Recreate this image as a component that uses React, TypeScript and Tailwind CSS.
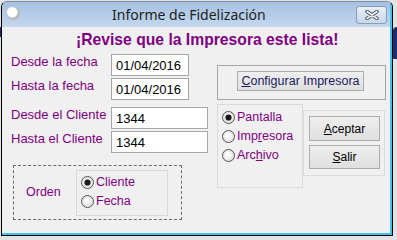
import React from "react";

const Radio = ({ checked }: { checked?: boolean }) => (
  <svg width="13" height="13" viewBox="0 0 13 13" className="shrink-0">
    <defs>
      <radialGradient id="rg" cx="0.4" cy="0.4" r="0.7">
        <stop offset="0" stopColor="#ffffff" />
        <stop offset="1" stopColor="#e4e4e4" />
      </radialGradient>
    </defs>
    <circle cx="6.5" cy="6.5" r="6" fill="url(#rg)" stroke="#505050" strokeWidth="1" />
    <circle cx="6.5" cy="6.5" r="4.8" fill="none" stroke="#d6d6d6" strokeWidth="0.8" />
    {checked && <circle cx="6.5" cy="6.5" r="3.1" fill="#1a1a1a" />}
  </svg>
);

const RadioRow = ({ checked, children }: { checked?: boolean; children: React.ReactNode }) => (
  <div className="h-[19px] flex items-center gap-[2px]">
    <Radio checked={checked} />
    <span className="text-[12.5px] leading-[15px] text-[#800080]">{children}</span>
  </div>
);

const Field = ({ label, value, w, mt }: { label: string; value: string; w: string; mt: string }) => (
  <div className={`flex items-start ${mt}`}>
    <div className="w-[100px] text-[13px] leading-[15px] text-[#800080]">{label}</div>
    <div className={`${w} h-[22px] border border-[#a6a6a6] bg-white pl-[4px] pt-[3px] text-[13px] leading-[15px] text-black`}>
      {value}
    </div>
  </div>
);

const Btn = ({ children, h }: { children: React.ReactNode; h: string }) => (
  <div
    className={`w-[71px] ${h} border border-[#acacac] bg-gradient-to-b from-[#efefef] to-[#dfdfdf] flex items-center justify-center text-[12px] leading-[14px] text-black`}
  >
    {children}
  </div>
);

export default function App() {
  return (
    <div className="relative w-[397px] h-[240px] overflow-hidden bg-[#e3e3e3] pt-[1px] font-['Liberation_Sans',Arial,sans-serif]">
      <div className="absolute right-0 top-[27px] w-[4px] h-[32px] bg-[#1e2d6e] rounded-tl-[4px]" />
      <div className="absolute left-0 top-[27px] w-[1px] h-[10px] bg-[#1e2d6e]" />
      <div className="ml-[1px] w-[392px] h-[235px] border border-black border-t-[#7d8fa8] rounded-t-[6px] overflow-hidden flex flex-col">
        <div className="flex-1 flex flex-col border-r-2 border-b-2 border-[#3fc3ee]">
          {/* title bar */}
          <div className="h-[25px] shrink-0 flex items-start bg-gradient-to-b from-[#a6c1e1] to-[#c4d8ee]">
            <svg width="16" height="16" viewBox="0 0 16 16" className="ml-[4px] mt-[4px] shrink-0">
              <circle cx="7.5" cy="7.5" r="6.3" fill="#b8b8b8" />
              <circle cx="6.3" cy="6.3" r="5.4" fill="#ffffff" />
            </svg>
            <div className="ml-[90px] mt-[3px] text-[14px] leading-[19px] text-[#1e1e1e] font-['Noto_Sans',sans-serif]">
              Informe de Fidelización
            </div>
            <div className="ml-auto mr-[3px] mt-[4px] w-[31px] h-[18px] rounded-[3px] border border-[#8b9bb3] bg-gradient-to-b from-[#e6eef7] to-[#c8d8ec] flex items-center justify-center">
              <svg width="14" height="10" viewBox="0 0 14 10">
                <path d="M2 1.5 L12 8.5 M12 1.5 L2 8.5" stroke="#555a60" strokeWidth="3.6" strokeLinecap="round" />
                <path d="M2 1.5 L12 8.5 M12 1.5 L2 8.5" stroke="#eef0f2" strokeWidth="1.6" strokeLinecap="round" />
              </svg>
            </div>
          </div>
          {/* client */}
          <div className="flex-1 bg-[#f0f0f0] flex flex-col">
            <div className="pl-[74px] mt-[4px] h-[18px] text-[15.7px] leading-[18px] font-bold text-[#800080]">
              ¡Revise que la Impresora este lista!
            </div>
            <div className="flex items-start">
              {/* left column */}
              <div className="w-[215px] pl-[9px] pt-[5px] flex flex-col">
                <Field label="Desde la fecha" value="01/04/2016" w="w-[78px]" mt="mt-0" />
                <Field label="Hasta la fecha" value="01/04/2016" w="w-[78px]" mt="mt-[2px]" />
                <Field label="Desde el Cliente" value="1344" w="w-[97px]" mt="mt-[7px]" />
                <Field label="Hasta el Cliente" value="1344" w="w-[97px]" mt="mt-[2px]" />
                <div className="ml-[2px] mt-[12px] w-[169px] h-[55px] border border-dashed border-[#6b6b6b] flex items-start pl-[12px]">
                  <div className="w-[50px] mt-[19px] text-[12.5px] leading-[15px] text-[#800080]">Orden</div>
                  <div className="mt-[4px] w-[92px] h-[46px] border border-[#d9d9d9] pl-[4px] pt-[2px] flex flex-col">
                    <RadioRow checked>Cliente</RadioRow>
                    <RadioRow>Fecha</RadioRow>
                  </div>
                </div>
              </div>
              {/* right column */}
              <div className="pt-[16px] flex flex-col">
                <div className="w-[169px] h-[35px] border border-[#a6a6a6] pl-[19px] pt-[5px]">
                  <div className="w-[127px] h-[20px] border border-[#acacac] bg-gradient-to-b from-[#efefef] to-[#dfdfdf] flex items-center justify-center text-[12.5px] leading-[15px] text-[#1a1a5e]">
                    <span>
                      <span className="underline">C</span>onfigurar Impresora
                    </span>
                  </div>
                </div>
                <div className="flex items-start mt-[4px]">
                  <div className="w-[86px] h-[84px] border border-[#dadada] pl-[4px] pt-[3px] flex flex-col">
                    <RadioRow checked>Pantalla</RadioRow>
                    <RadioRow>
                      Imp<span className="underline">r</span>esora
                    </RadioRow>
                    <RadioRow>
                      Arc<span className="underline">h</span>ivo
                    </RadioRow>
                  </div>
                  <div className="mt-[6px] w-[82px] h-[66px] border border-[#dcdcdc] pl-[5px] pt-[5px] flex flex-col gap-[4px]">
                    <Btn h="h-[25px]">
                      <span>
                        <span className="underline">A</span>ceptar
                      </span>
                    </Btn>
                    <Btn h="h-[24px]">
                      <span>
                        <span className="underline">S</span>alir
                      </span>
                    </Btn>
                  </div>
                </div>
              </div>
            </div>
          </div>
        </div>
      </div>
    </div>
  );
}
